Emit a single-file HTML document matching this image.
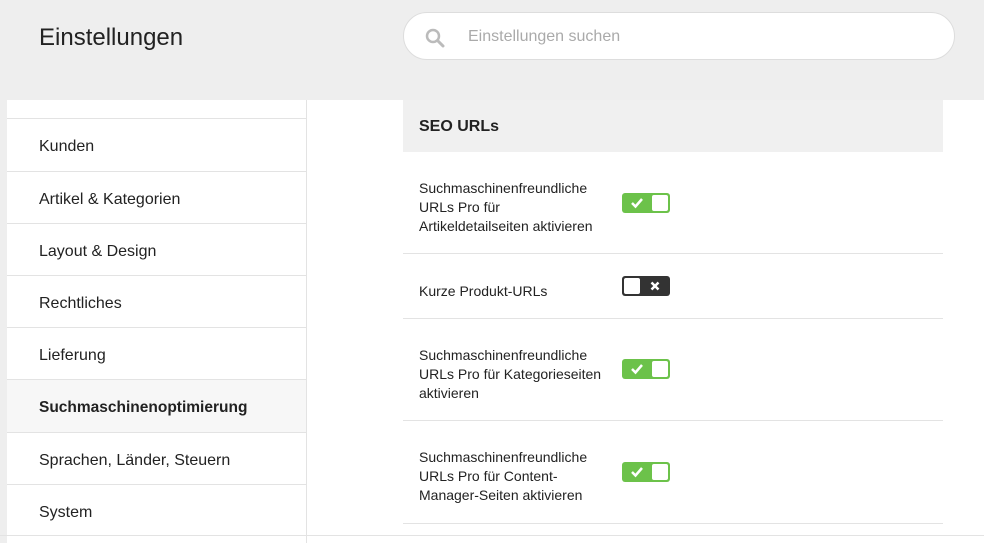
<!DOCTYPE html>
<html><head><meta charset="utf-8"><style>
*{margin:0;padding:0;box-sizing:border-box}
body{width:984px;height:543px;overflow:hidden;background:#eeeeee;font-family:"Liberation Sans",sans-serif;color:#222;position:relative}
.title{position:absolute;left:39px;top:24px;font-size:24px;color:#222}
.search{position:absolute;left:403px;top:12px;width:552px;height:48px;border:1px solid #ddd;border-radius:24px;background:#fff}
.search span{position:absolute;left:64px;top:15px;font-size:16px;color:#aaa}
.search svg{position:absolute;left:21px;top:15px}
.side{position:absolute;left:7px;top:100px;width:300px;height:443px;background:#fff;border-right:1px solid #e3e3e3;overflow:hidden}
.side div{position:absolute;left:0;width:299px;border-top:1px solid #e3e3e3;height:53px;padding-left:32px;line-height:56px;font-size:16px;color:#222}
.side div.act{background:#f7f7f7;font-weight:bold;font-size:15.5px}
.main{position:absolute;left:307px;top:100px;width:677px;height:443px;background:#fff}
.hdr{position:absolute;left:96px;top:0;width:540px;height:52px;background:#f0f0f0;font-weight:bold;font-size:16px;padding-left:16px;line-height:54px}
.row{position:absolute;left:96px;width:540px;border-bottom:1px solid #e3e3e3}
.row p{position:absolute;left:16px;font-size:14px;line-height:19px;color:#222;width:190px}
.tg{position:absolute;left:219px;width:48px;height:20px;border-radius:3px}
.on{background:#6cc24a}
.off{background:#333}
.knob{position:absolute;top:2px;width:16px;height:16px;background:#fff;border-radius:2px}
.bot{position:absolute;left:0;top:535px;width:984px;height:1px;background:#e3e3e3}
</style></head><body>
<div class="title">Einstellungen</div>
<div class="search"><svg width="20" height="20" viewBox="0 0 20 20"><circle cx="8" cy="8" r="6" fill="none" stroke="#bbb" stroke-width="2.5"/><path d="M12.5 12.5L18 18" stroke="#bbb" stroke-width="3" stroke-linecap="round"/></svg><span>Einstellungen suchen</span></div>
<div class="side">
<div style="top:18px">Kunden</div>
<div style="top:71px">Artikel &amp; Kategorien</div>
<div style="top:123px">Layout &amp; Design</div>
<div style="top:175px">Rechtliches</div>
<div style="top:227px">Lieferung</div>
<div class="act" style="top:279px">Suchmaschinenoptimierung</div>
<div style="top:332px">Sprachen, Länder, Steuern</div>
<div style="top:384px">System</div>
</div>
<div class="main">
<div class="hdr">SEO URLs</div>
<div class="row" style="top:52px;height:102px"><p style="top:27px">Suchmaschinenfreundliche URLs Pro für Artikeldetailseiten aktivieren</p>
<div class="tg on" style="top:41px"><div class="knob" style="left:30px"></div><svg style="position:absolute;left:8px;top:4px" width="14" height="12" viewBox="0 0 14 12"><path d="M2 6l3.5 3.5L12 2" fill="none" stroke="#fff" stroke-width="2.5"/></svg></div></div>
<div class="row" style="top:154px;height:65px"><p style="top:28px">Kurze Produkt-URLs</p>
<div class="tg off" style="top:22px"><div class="knob" style="left:2px"></div><svg style="position:absolute;left:28px;top:5px" width="10" height="10" viewBox="0 0 10 10"><path d="M1.5 1.5l7 7M8.5 1.5l-7 7" stroke="#fff" stroke-width="2.5"/></svg></div></div>
<div class="row" style="top:219px;height:102px"><p style="top:27px">Suchmaschinenfreundliche URLs Pro für Kategorieseiten aktivieren</p>
<div class="tg on" style="top:40px"><div class="knob" style="left:30px"></div><svg style="position:absolute;left:8px;top:4px" width="14" height="12" viewBox="0 0 14 12"><path d="M2 6l3.5 3.5L12 2" fill="none" stroke="#fff" stroke-width="2.5"/></svg></div></div>
<div class="row" style="top:321px;height:103px"><p style="top:27px">Suchmaschinenfreundliche URLs Pro für Content-Manager-Seiten aktivieren</p>
<div class="tg on" style="top:41px"><div class="knob" style="left:30px"></div><svg style="position:absolute;left:8px;top:4px" width="14" height="12" viewBox="0 0 14 12"><path d="M2 6l3.5 3.5L12 2" fill="none" stroke="#fff" stroke-width="2.5"/></svg></div></div>
</div>
<div class="bot"></div>
</body></html>
